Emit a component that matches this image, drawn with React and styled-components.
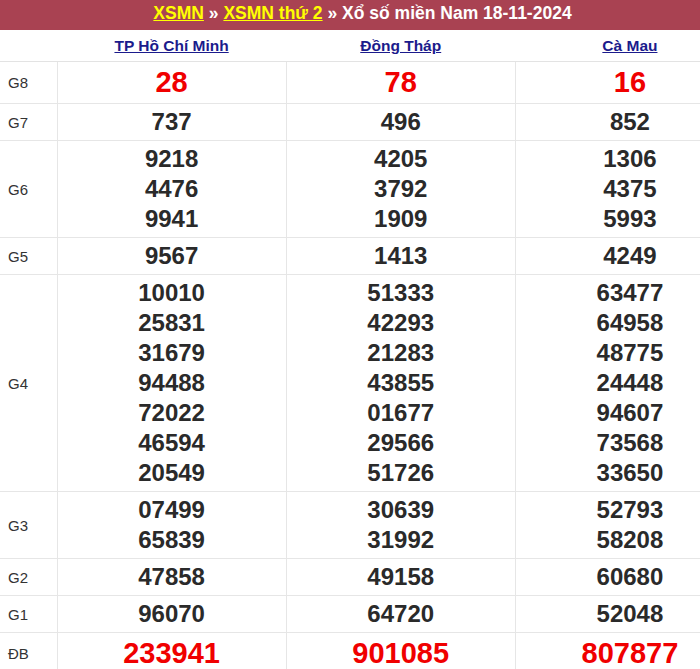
import React from 'react';
import styled, { createGlobalStyle } from 'styled-components';

const GlobalStyle = createGlobalStyle`
  body {
    margin: 0;
    background: #fff;
    overflow: hidden;
    font-family: Arial, "Liberation Sans", sans-serif;
  }
`;

// the table is wider than the window; the right edge is cut off like in the screenshot
const Viewport = styled.div`
  width: 100%;
  overflow: hidden;
`;

const Wrapper = styled.div`
  width: 745px;
`;

const TitleBar = styled.div`
  height: 30px;
  background: #a94252;
  color: #fff;
  font-size: 17.5px;
  font-weight: bold;
  line-height: 27px;
  text-align: center;
  padding-right: 20px;
  box-sizing: border-box;
  white-space: nowrap;
`;

const TitleLink = styled.a`
  color: #ffff00;
  text-decoration: underline;
`;

const Table = styled.table`
  width: 745px;
  border-collapse: collapse;
  table-layout: fixed;
`;

const HeadCell = styled.th`
  height: 31px;
  padding: 0;
  border-bottom: 1px solid #e3e3e3;
  text-align: center;
  font-size: 15.5px;
  font-weight: bold;
`;

const ProvinceLink = styled.a`
  color: #1b1b8c;
  text-decoration: underline;
`;

const Label = styled.td`
  width: 57px;
  padding: 0 0 0 8px;
  box-sizing: border-box;
  border: 1px solid #e6e6e6;
  border-left: none;
  font-size: 15px;
  color: #333;
  vertical-align: middle;
`;

const Cell = styled.td`
  padding: 3px 0;
  border: 1px solid #e6e6e6;
  text-align: center;
  vertical-align: middle;
`;

const Num = styled.div`
  font-weight: bold;
  font-size: ${(p) => (p.$big ? '29px' : '24px')};
  line-height: ${(p) => (p.$big ? '35px' : '30px')};
  color: ${(p) => (p.$red ? '#f00000' : '#2a2a2a')};
`;

const provinces = ['TP Hồ Chí Minh', 'Đồng Tháp', 'Cà Mau'];

const rows = [
  { label: 'G8', red: true, big: true, data: [['28'], ['78'], ['16']] },
  { label: 'G7', data: [['737'], ['496'], ['852']] },
  {
    label: 'G6',
    data: [
      ['9218', '4476', '9941'],
      ['4205', '3792', '1909'],
      ['1306', '4375', '5993'],
    ],
  },
  { label: 'G5', data: [['9567'], ['1413'], ['4249']] },
  {
    label: 'G4',
    data: [
      ['10010', '25831', '31679', '94488', '72022', '46594', '20549'],
      ['51333', '42293', '21283', '43855', '01677', '29566', '51726'],
      ['63477', '64958', '48775', '24448', '94607', '73568', '33650'],
    ],
  },
  {
    label: 'G3',
    data: [
      ['07499', '65839'],
      ['30639', '31992'],
      ['52793', '58208'],
    ],
  },
  { label: 'G2', data: [['47858'], ['49158'], ['60680']] },
  { label: 'G1', data: [['96070'], ['64720'], ['52048']] },
  { label: 'ĐB', red: true, big: true, data: [['233941'], ['901085'], ['807877']] },
];

function App() {
  return (
    <Viewport>
      <GlobalStyle />
      <Wrapper>
        <TitleBar>
          <TitleLink href="#">XSMN</TitleLink> » <TitleLink href="#">XSMN thứ 2</TitleLink> » Xổ số miền Nam 18-11-2024
        </TitleBar>
        <Table>
          <colgroup>
            <col style={{ width: 57 }} />
            <col />
            <col />
            <col />
          </colgroup>
          <thead>
            <tr>
              <HeadCell />
              {provinces.map((p) => (
                <HeadCell key={p}>
                  <ProvinceLink href="#">{p}</ProvinceLink>
                </HeadCell>
              ))}
            </tr>
          </thead>
          <tbody>
            {rows.map((row) => (
              <tr key={row.label}>
                <Label>{row.label}</Label>
                {row.data.map((nums, i) => (
                  <Cell key={i}>
                    {nums.map((n) => (
                      <Num key={n} $red={row.red} $big={row.big}>
                        {n}
                      </Num>
                    ))}
                  </Cell>
                ))}
              </tr>
            ))}
          </tbody>
        </Table>
      </Wrapper>
    </Viewport>
  );
}

export default App;
